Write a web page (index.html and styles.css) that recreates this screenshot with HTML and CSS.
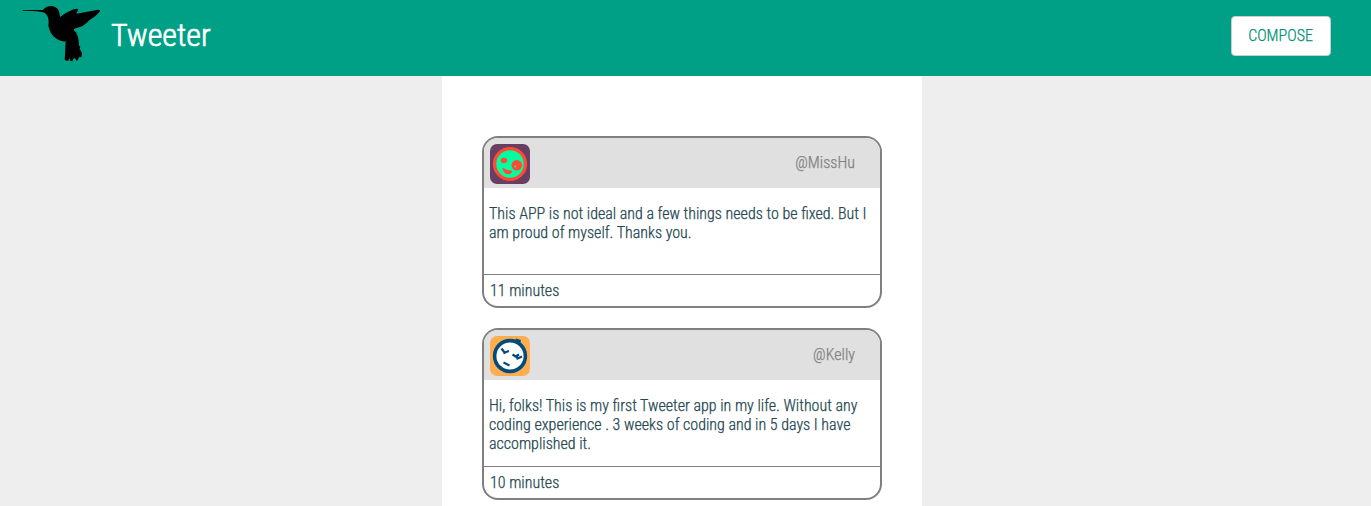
FILE: index.html
```html
<!DOCTYPE html>
<html lang="en">
<head>
<meta charset="utf-8">
<title>Tweeter</title>
<link rel="stylesheet" href="styles.css">
</head>
<body>
<header class="nav">
  <svg class="logo" viewBox="0 0 285 204" aria-hidden="true"><path d="M23 30L84 30Q93 17 112 18Q130 22 133 38L135 51Q153 37 176 28Q188 25 190 28L184 41L249 29Q258 29 254 35Q242 50 223 61Q217 68 202 79L178 86Q174 90 183 97Q191 111 191 124L192 137L196 139L194 146L201 160L199 172L192 171L189 179L184 182L180 174L175 176L172 184L166 183L163 174L160 182L154 182L149 179L152 124Q140 125 131 120Q110 109 104 90Q98 77 101 62Q100 47 89 38Q76 32 23 32Z"/></svg>
  <h1 class="brand"><span class="text">Tweeter</span></h1>
  <button class="compose"><span class="text">COMPOSE</span></button>
</header>
<main class="container">
  <article class="tweet">
    <header class="tweet-header">
      <svg class="avatar" viewBox="0 0 40 40" aria-hidden="true"><rect width="40" height="40" rx="7" fill="#693e63"/><circle cx="20" cy="20" r="15.4" fill="#00ff9f" stroke="#ff4b36" stroke-width="3.4"/><ellipse cx="14" cy="16.5" rx="3.2" ry="2.7" fill="#ff4b36"/><circle cx="26.8" cy="21.2" r="5.3" fill="#ff4b36"/><circle cx="25.3" cy="22.5" r=".9" fill="#00ff9f"/><path d="M12.5 23.5Q17 26.5 22 26.5Q22 30.5 17.5 30.3Q12.5 29 12.5 23.5Z" fill="#ff4b36"/></svg>
      <span class="handle text">@MissHu</span>
    </header>
    <p class="body text">This APP is not ideal and a few things needs to be fixed. But I<br>am proud of myself. Thanks you.</p>
    <footer class="tweet-footer"><span class="text">11 minutes</span></footer>
  </article>
  <article class="tweet">
    <header class="tweet-header">
      <svg class="avatar" viewBox="0 0 40 40" aria-hidden="true"><rect width="40" height="40" rx="7" fill="#ffad51"/><path d="M26 2.5L31 4L30 8L24 7Z" fill="#034b7b"/><circle cx="20" cy="20" r="15.4" fill="#fff" stroke="#034b7b" stroke-width="3.6"/><path d="M11.5 12.5L14.5 16.5L19 15M14.8 15.5L14.3 18M22.5 18.5L25.5 20.5L29 18.5M26.5 20L27.5 22.5L32 20.5M13.5 26.5L19.5 29.5" fill="none" stroke="#034b7b" stroke-width="2.2"/></svg>
      <span class="handle text">@Kelly</span>
    </header>
    <p class="body text">Hi, folks! This is my first Tweeter app in my life. Without any<br>coding experience . 3 weeks of coding and in 5 days I have<br>accomplished it.</p>
    <footer class="tweet-footer"><span class="text">10 minutes</span></footer>
  </article>
</main>
</body>
</html>
```
FILE: styles.css
```css
* { box-sizing: border-box; }
body {
  margin: 0;
  background: #eee;
  color: #244751;
  font: 300 16px/19px "Roboto Condensed", Roboto, sans-serif;
  font-stretch: 75%;
  height: 506px;
  overflow: hidden;
}
.text { white-space: nowrap; -webkit-text-stroke: 0.25px currentColor; }
.nav {
  display: flex;
  align-items: flex-start;
  height: 76px;
  padding: 0 40px 0 15px;
  background: #00a087;
}
.logo { width: 95px; height: 68px; }
.brand {
  margin: 16px 0 0 1px;
  color: #fff;
  font-size: 32px;
  line-height: 38px;
  font-weight: 300;
}
.brand .text { -webkit-text-stroke-width: 0.7px; }
.compose {
  width: 100px;
  height: 40px;
  margin: 16px 0 0 auto;
  padding: 0 1px 2px 0;
  border: 1px solid #ccc;
  border-radius: 4px;
  background: #fff;
  color: #009078;
  font: inherit;
}
.container {
  width: 480px;
  height: 430px;
  margin-left: 442px;
  padding: 60px 40px 0;
  background: #fff;
}
.tweet {
  display: flex;
  flex-direction: column;
  height: 172px;
  margin-bottom: 20px;
  border: 2px solid #808080;
  border-radius: 16px;
  overflow: hidden;
}
.tweet-header {
  display: flex;
  justify-content: space-between;
  height: 50px;
  padding: 6px 25px 0 6px;
  background: #e0e0e0;
}
.avatar { width: 40px; height: 40px; }
.handle { margin-top: 9px; color: #808080; }
.body { margin: 16px 5px 0; }
.tweet-footer {
  height: 32px;
  margin-top: auto;
  padding: 6px 6px 0;
  border-top: 1px solid #808080;
}
```
